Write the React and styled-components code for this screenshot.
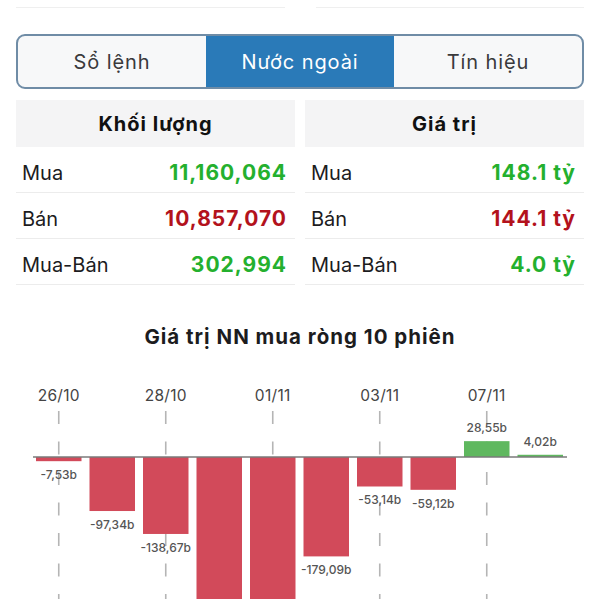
import React, { useState } from 'react';
import styled, { createGlobalStyle } from 'styled-components';

const GlobalStyle = createGlobalStyle`
  body {
    margin: 0;
    background: #ffffff;
    font-family: Inter, "Noto Sans", "Liberation Sans", sans-serif;
    color: #1c1c1e;
  }
`;

const Page = styled.div`
  width: 600px;
  height: 600px;
  overflow: hidden;
  background: #fff;
`;

const TopLines = styled.div`
  display: grid;
  grid-template-columns: 1fr 1fr;
  gap: 31px;
  padding: 0 16px;
`;

const TopLine = styled.div`
  height: 7px;
  border-bottom: 1px solid #efefef;
`;

const Tabs = styled.div`
  display: grid;
  grid-template-columns: 1fr 1fr 1fr;
  margin: 26px 16px 0;
  height: 51px;
  border: 2px solid #6f8ca6;
  border-radius: 9px;
  overflow: hidden;
  background: #f7f8f9;
`;

const Tab = styled.button`
  border: none;
  margin: 0;
  padding: 0;
  font-family: inherit;
  font-size: 20px;
  letter-spacing: 0.9px;
  cursor: pointer;
  background: ${p => (p.$active ? '#2a7ab8' : 'transparent')};
  color: ${p => (p.$active ? '#ffffff' : '#3a3a3c')};
`;

const Tables = styled.div`
  display: grid;
  grid-template-columns: 1fr 1fr;
  gap: 10px;
  margin: 11px 16px 0;
`;

const Table = styled.div`
  display: flex;
  flex-direction: column;
`;

const HeadRow = styled.div`
  height: 47px;
  display: flex;
  align-items: center;
  justify-content: center;
  background: #f4f4f5;
  font-size: 20px;
  font-weight: 700;
  letter-spacing: 1px;
  color: #111;
`;

const Row = styled.div`
  box-sizing: border-box;
  height: 46px;
  display: flex;
  align-items: center;
  justify-content: space-between;
  padding: 6px 8px 0 6px;
  border-bottom: 1px solid #ececec;
  font-size: 20px;
`;

const Label = styled.span`
  color: #1c1c1e;
`;

const Value = styled.span`
  font-size: 21px;
  font-weight: 700;
  letter-spacing: 1px;
  color: ${p => (p.$tone === 'down' ? '#b3121c' : '#24b02e')};
`;

const ChartTitle = styled.div`
  margin-top: 39px;
  text-align: center;
  font-size: 20.5px;
  font-weight: 700;
  letter-spacing: 1px;
  color: #1c1c1e;
`;

const ChartSvg = styled.svg`
  display: block;
  margin-top: 20px;
`;

const volume = [
  { label: 'Mua', value: '11,160,064', tone: 'up' },
  { label: 'Bán', value: '10,857,070', tone: 'down' },
  { label: 'Mua-Bán', value: '302,994', tone: 'up' },
];

const worth = [
  { label: 'Mua', value: '148.1 tỷ', tone: 'up' },
  { label: 'Bán', value: '144.1 tỷ', tone: 'down' },
  { label: 'Mua-Bán', value: '4.0 tỷ', tone: 'up' },
];

const sessions = [
  { date: '26/10', v: -7.53 },
  { date: '27/10', v: -97.34 },
  { date: '28/10', v: -138.67 },
  { date: '31/10', v: -412.4 },
  { date: '01/11', v: -386.2 },
  { date: '02/11', v: -179.09 },
  { date: '03/11', v: -53.14 },
  { date: '04/11', v: -59.12 },
  { date: '07/11', v: 28.55 },
  { date: '08/11', v: 4.02 },
];

const fmt = v => v.toFixed(2).replace('.', ',') + 'b';

function NetChart() {
  const H = 230;
  const base = 88;
  const scale = 0.555;
  const x0 = 36;
  const pitch = 53.5;
  const bw = 45.5;

  return (
    <ChartSvg width="600" height={H} viewBox={`0 0 600 ${H}`}>
      {sessions.map((s, i) => {
        if (i % 2) return null;
        const cx = x0 + i * pitch + bw / 2;
        return (
          <g key={s.date}>
            <text x={cx} y={32} textAnchor="middle" fontSize="15.5" fill="#444"
              letterSpacing="0.3" fontFamily="Inter, sans-serif">{s.date}</text>
            <line x1={cx} x2={cx} y1={42} y2={H} stroke="#b5b5b5"
              strokeWidth="1.6" strokeDasharray="13 17.5" />
          </g>
        );
      })}
      {sessions.map((s, i) => {
        const x = x0 + i * pitch;
        const h = Math.max(Math.abs(s.v) * scale, 2);
        const up = s.v >= 0;
        const y = up ? base - h : base;
        const ly = up ? y - 9 : y + h + 18;
        return (
          <g key={s.date + 'b'}>
            <rect x={x} y={y} width={bw} height={h} fill={up ? '#5fb85f' : '#d24a5a'} />
            {ly < H - 4 && (
              <text x={x + bw / 2} y={ly} textAnchor="middle" fontSize="12" fill="#555"
                fontWeight="500" fontFamily="Inter, sans-serif">{fmt(s.v)}</text>
            )}
          </g>
        );
      })}
      <line x1={33} x2={567} y1={base} y2={base} stroke="#7a7a7a" strokeWidth="1.5" />
    </ChartSvg>
  );
}

function StatTable({ title, rows }) {
  return (
    <Table>
      <HeadRow>{title}</HeadRow>
      {rows.map(r => (
        <Row key={r.label}>
          <Label>{r.label}</Label>
          <Value $tone={r.tone}>{r.value}</Value>
        </Row>
      ))}
    </Table>
  );
}

export default function App() {
  const [tab, setTab] = useState(1);
  const tabs = ['Sổ lệnh', 'Nước ngoài', 'Tín hiệu'];

  return (
    <Page>
      <GlobalStyle />
      <TopLines>
        <TopLine />
        <TopLine />
      </TopLines>
      <Tabs>
        {tabs.map((t, i) => (
          <Tab key={t} $active={tab === i} onClick={() => setTab(i)}>{t}</Tab>
        ))}
      </Tabs>
      <Tables>
        <StatTable title="Khối lượng" rows={volume} />
        <StatTable title="Giá trị" rows={worth} />
      </Tables>
      <ChartTitle>Giá trị NN mua ròng 10 phiên</ChartTitle>
      <NetChart />
    </Page>
  );
}
